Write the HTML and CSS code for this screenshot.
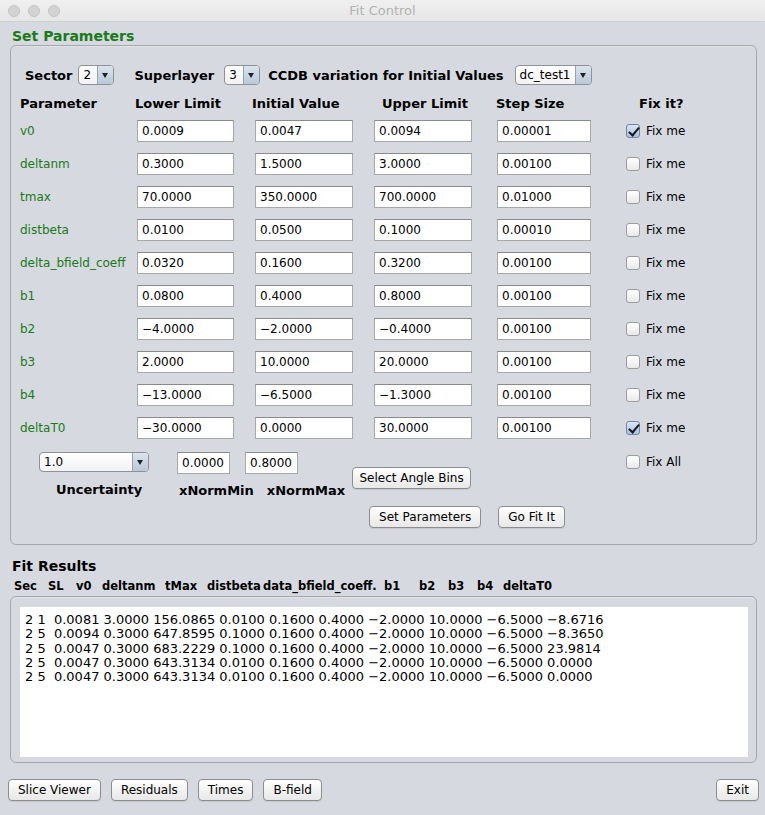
FILE: index.html
```html
<!DOCTYPE html>
<html>
<head>
<meta charset="utf-8">
<link rel="stylesheet" href="styles.css">
</head>
<body>
<div class="window">
  <div class="titlebar">
    <div class="lights"><span></span><span></span><span></span></div>
    <div class="title">Fit Control</div>
  </div>
  <div class="content">
    <div class="section-title green">Set Parameters</div>
    <div class="panel params">
      <div class="toprow">
        <span class="b">Sector</span>
        <span class="combo w36 c1"><span class="cv">2</span><span class="arrow"></span></span>
        <span class="b sl">Superlayer</span>
        <span class="combo w36 c2"><span class="cv">3</span><span class="arrow"></span></span>
        <span class="b ccdb">CCDB variation for Initial Values</span>
        <span class="combo w77 c3"><span class="cv">dc_test1</span><span class="arrow"></span></span>
      </div>
      <div class="grid header">
        <span class="b h1">Parameter</span>
        <span class="b h2">Lower Limit</span>
        <span class="b h3">Initial Value</span>
        <span class="b h4">Upper Limit</span>
        <span class="b h5">Step Size</span>
        <span class="b h6">Fix it?</span>
      </div>
      <div class="grid row"><span class="pname">v0</span><span class="field">0.0009</span><span class="field">0.0047</span><span class="field">0.0094</span><span class="field">0.00001</span><label class="chk"><span class="box on"></span>Fix me</label></div>
      <div class="grid row"><span class="pname">deltanm</span><span class="field">0.3000</span><span class="field">1.5000</span><span class="field">3.0000</span><span class="field">0.00100</span><label class="chk"><span class="box"></span>Fix me</label></div>
      <div class="grid row"><span class="pname">tmax</span><span class="field">70.0000</span><span class="field">350.0000</span><span class="field">700.0000</span><span class="field">0.01000</span><label class="chk"><span class="box"></span>Fix me</label></div>
      <div class="grid row"><span class="pname">distbeta</span><span class="field">0.0100</span><span class="field">0.0500</span><span class="field">0.1000</span><span class="field">0.00010</span><label class="chk"><span class="box"></span>Fix me</label></div>
      <div class="grid row"><span class="pname">delta_bfield_coeff</span><span class="field">0.0320</span><span class="field">0.1600</span><span class="field">0.3200</span><span class="field">0.00100</span><label class="chk"><span class="box"></span>Fix me</label></div>
      <div class="grid row"><span class="pname">b1</span><span class="field">0.0800</span><span class="field">0.4000</span><span class="field">0.8000</span><span class="field">0.00100</span><label class="chk"><span class="box"></span>Fix me</label></div>
      <div class="grid row"><span class="pname">b2</span><span class="field">−4.0000</span><span class="field">−2.0000</span><span class="field">−0.4000</span><span class="field">0.00100</span><label class="chk"><span class="box"></span>Fix me</label></div>
      <div class="grid row"><span class="pname">b3</span><span class="field">2.0000</span><span class="field">10.0000</span><span class="field">20.0000</span><span class="field">0.00100</span><label class="chk"><span class="box"></span>Fix me</label></div>
      <div class="grid row"><span class="pname">b4</span><span class="field">−13.0000</span><span class="field">−6.5000</span><span class="field">−1.3000</span><span class="field">0.00100</span><label class="chk"><span class="box"></span>Fix me</label></div>
      <div class="grid row"><span class="pname">deltaT0</span><span class="field">−30.0000</span><span class="field">0.0000</span><span class="field">30.0000</span><span class="field">0.00100</span><label class="chk"><span class="box on"></span>Fix me</label></div>
      <div class="lower">
        <div class="unc">
          <span class="combo w110"><span class="cv">1.0</span><span class="arrow"></span></span>
          <span class="b unclabel">Uncertainty</span>
        </div>
        <div class="norm">
          <div class="normfields"><span class="field small">0.0000</span><span class="field small">0.8000</span></div>
          <div class="normlabels"><span class="b">xNormMin</span><span class="b">xNormMax</span></div>
        </div>
        <div class="btncol">
          <span class="btn angle">Select Angle Bins</span>
          <div class="btnrow"><span class="btn">Set Parameters</span><span class="btn">Go Fit It</span></div>
        </div>
        <label class="chk fixall"><span class="box"></span>Fix All</label>
      </div>
    </div>
    <div class="section-title results-title">Fit Results</div>
    <div class="reshead">
      <span class="r1">Sec</span><span class="r2">SL</span><span class="r3">v0</span><span class="r4">deltanm</span><span class="r5">tMax</span><span class="r6">distbeta</span><span class="r7">data_bfield_coeff.</span><span class="r8">b1</span><span class="r9">b2</span><span class="r10">b3</span><span class="r11">b4</span><span class="r12">deltaT0</span>
    </div>
    <div class="panel respanel">
      <div class="textarea">2 1  0.0081 3.0000 156.0865 0.0100 0.1600 0.4000 −2.0000 10.0000 −6.5000 −8.6716
2 5  0.0094 0.3000 647.8595 0.1000 0.1600 0.4000 −2.0000 10.0000 −6.5000 −8.3650
2 5  0.0047 0.3000 683.2229 0.1000 0.1600 0.4000 −2.0000 10.0000 −6.5000 23.9814
2 5  0.0047 0.3000 643.3134 0.0100 0.1600 0.4000 −2.0000 10.0000 −6.5000 0.0000
2 5  0.0047 0.3000 643.3134 0.0100 0.1600 0.4000 −2.0000 10.0000 −6.5000 0.0000</div>
    </div>
    <div class="bottombar">
      <span class="btn">Slice Viewer</span>
      <span class="btn">Residuals</span>
      <span class="btn">Times</span>
      <span class="btn">B-field</span>
      <span class="spacer"></span>
      <span class="btn">Exit</span>
    </div>
  </div>
</div>
</body>
</html>
```

FILE: styles.css
```css
* { box-sizing: border-box; }
html, body { margin: 0; padding: 0; }
body {
  width: 765px;
  height: 815px;
  background: #d6d9df;
  font-family: "DejaVu Sans", "Noto Sans", sans-serif;
  font-size: 12px;
  color: #000;
  overflow: hidden;
}
.window { width: 765px; height: 815px; display: flex; flex-direction: column; }
.titlebar {
  height: 22px;
  background: linear-gradient(#f0f0f0, #e6e6e6);
  border-bottom: 1px solid #cfcfcf;
  display: flex;
  align-items: center;
  position: relative;
}
.lights { display: flex; gap: 8px; padding-left: 8px; }
.lights span {
  width: 12px; height: 12px; border-radius: 50%;
  background: #d3d3d3; border: 1px solid #c4c4c4;
}
.title {
  position: absolute; left: 0; right: 0; top: 3px;
  text-align: center; color: #b2b2b2; font-size: 13px;
  font-family: "DejaVu Sans", sans-serif;
}
.content { padding: 0 8px 0 8px; display: flex; flex-direction: column; }
.b { font-weight: bold; font-size: 13px; }
.green { color: #1a7a1a; }
.section-title { font-weight: bold; font-size: 14px; padding-left: 4px; height: 23px; padding-top: 6px; }
.panel {
  margin: 0 0 0 2px;
  width: 747px;
  border: 1px solid #a5a7ab;
  border-radius: 6px;
  box-shadow: inset 0 1px 0 rgba(255,255,255,0.3);
}
.params { height: 500px; padding: 18px 0 0 0; }
.toprow { display: flex; align-items: center; padding-left: 14px; height: 22px; }
.toprow .c1 { margin-left: 6px; }
.sl { margin-left: 20px; }
.toprow .c2 { margin-left: 10px; }
.ccdb { margin-left: 8px; }
.toprow .c3 { margin-left: 11px; }
.combo {
  display: inline-flex; height: 20px;
  border: 1px solid #8e9197; border-radius: 4px;
  background: linear-gradient(#ffffff, #f2f2f2);
  overflow: hidden;
  font-size: 12px;
}
.combo .cv { flex: 1; padding-left: 4px; line-height: 18px; }
.combo .arrow {
  width: 16px; border-left: 1px solid #9aa0a8;
  background: linear-gradient(#dbe4ee, #b9c8d8);
  position: relative;
}
.combo .arrow::after {
  content: ""; position: absolute; left: 4px; top: 7px;
  border-left: 3.5px solid transparent; border-right: 3.5px solid transparent;
  border-top: 5px solid #222;
}
.w36 { width: 36px; }
.w77 { width: 77px; }
.w110 { width: 110px; }
.grid {
  display: grid;
  grid-template-columns: 117px 97px 21px 98px 21px 98px 25px 94px 35px auto;
  padding-left: 9px;
}
.grid > :nth-child(2) { grid-column: 2; }
.grid > :nth-child(3) { grid-column: 4; }
.grid > :nth-child(4) { grid-column: 6; }
.grid > :nth-child(5) { grid-column: 8; }
.grid > :nth-child(6) { grid-column: 10; }
.header { margin-top: 7px; height: 21px; align-items: center; }
.header .h2 { margin-left: -2px; }
.header .h3 { margin-left: -3px; }
.header .h4 { margin-left: 8px; }
.header .h5 { margin-left: -1px; }
.header .h6 { margin-left: 13px; }
.row { height: 33px; align-items: center; }
.pname { color: #1a7a1a; font-size: 12px; }
.field {
  height: 22px; background: #fff;
  border: 1px solid #a8a8a8; border-top-color: #8a8a8a;
  padding-left: 4px; line-height: 20px; font-size: 12px;
  white-space: nowrap;
}
.chk { display: flex; align-items: center; gap: 6px; font-size: 12px; }
.box {
  width: 14px; height: 14px; border: 1px solid #9c9c9c; border-radius: 3px;
  background: linear-gradient(#ffffff, #e9e9e9);
  position: relative;
}
.box.on { background: linear-gradient(#d9e6f5, #a9c2e0); border-color: #6d87a6; }
.box.on::after {
  content: ""; position: absolute; left: 4px; top: 0px;
  width: 4px; height: 9px; border-right: 2px solid #1a1a1a; border-bottom: 2px solid #1a1a1a;
  transform: rotate(40deg);
}
.lower { display: flex; padding-left: 28px; margin-top: 8px; position: relative; }
.unc { display: flex; flex-direction: column; width: 138px; }
.unclabel { margin-top: 10px; margin-left: 17px; }
.norm { display: flex; flex-direction: column; }
.normfields { display: flex; gap: 15px; }
.field.small { width: 53px; }
.normlabels { display: flex; gap: 13px; margin-top: 9px; margin-left: 2px; }
.btncol { display: flex; flex-direction: column; margin-left: 7px; padding-top: 15px; }
.btnrow { display: flex; gap: 17px; margin-top: 17px; margin-left: 17px; }
.btn {
  display: inline-flex; align-items: center; justify-content: center;
  height: 22px; padding: 0 9px;
  border: 1px solid #8d8d8d; border-radius: 4px;
  background: linear-gradient(#ffffff, #f0f0f0 60%, #e8e8e8);
  font-size: 12px; white-space: nowrap;
  box-shadow: 0 1px 0 rgba(0,0,0,0.08);
}
.angle { width: 119px; }
.fixall { position: absolute; left: 615px; top: 3px; }
.results-title { padding-top: 13px; height: 29px; }
.reshead { display: flex; font-weight: bold; font-size: 11.5px; padding: 5px 0 0 6px; height: 22px; white-space: nowrap; }
.r1 { width: 34px; }
.r2 { width: 28px; }
.r3 { width: 26px; }
.r4 { width: 63px; }
.r5 { width: 42px; }
.r6 { width: 56px; }
.r7 { width: 121px; }
.r8 { width: 35px; }
.r9 { width: 29px; }
.r10 { width: 29px; }
.r11 { width: 26px; }
.respanel { height: 167px; padding: 10px 8px 4px 9px; }
.textarea {
  background: #fff; height: 150px;
  white-space: pre; font-size: 13px; line-height: 14.3px;
  padding: 6px 0 0 5px;
}
.bottombar { display: flex; gap: 10px; margin-top: 16px; }
.spacer { flex: 1; }
.bottombar .btn:last-child { margin-right: -2px; }
```
